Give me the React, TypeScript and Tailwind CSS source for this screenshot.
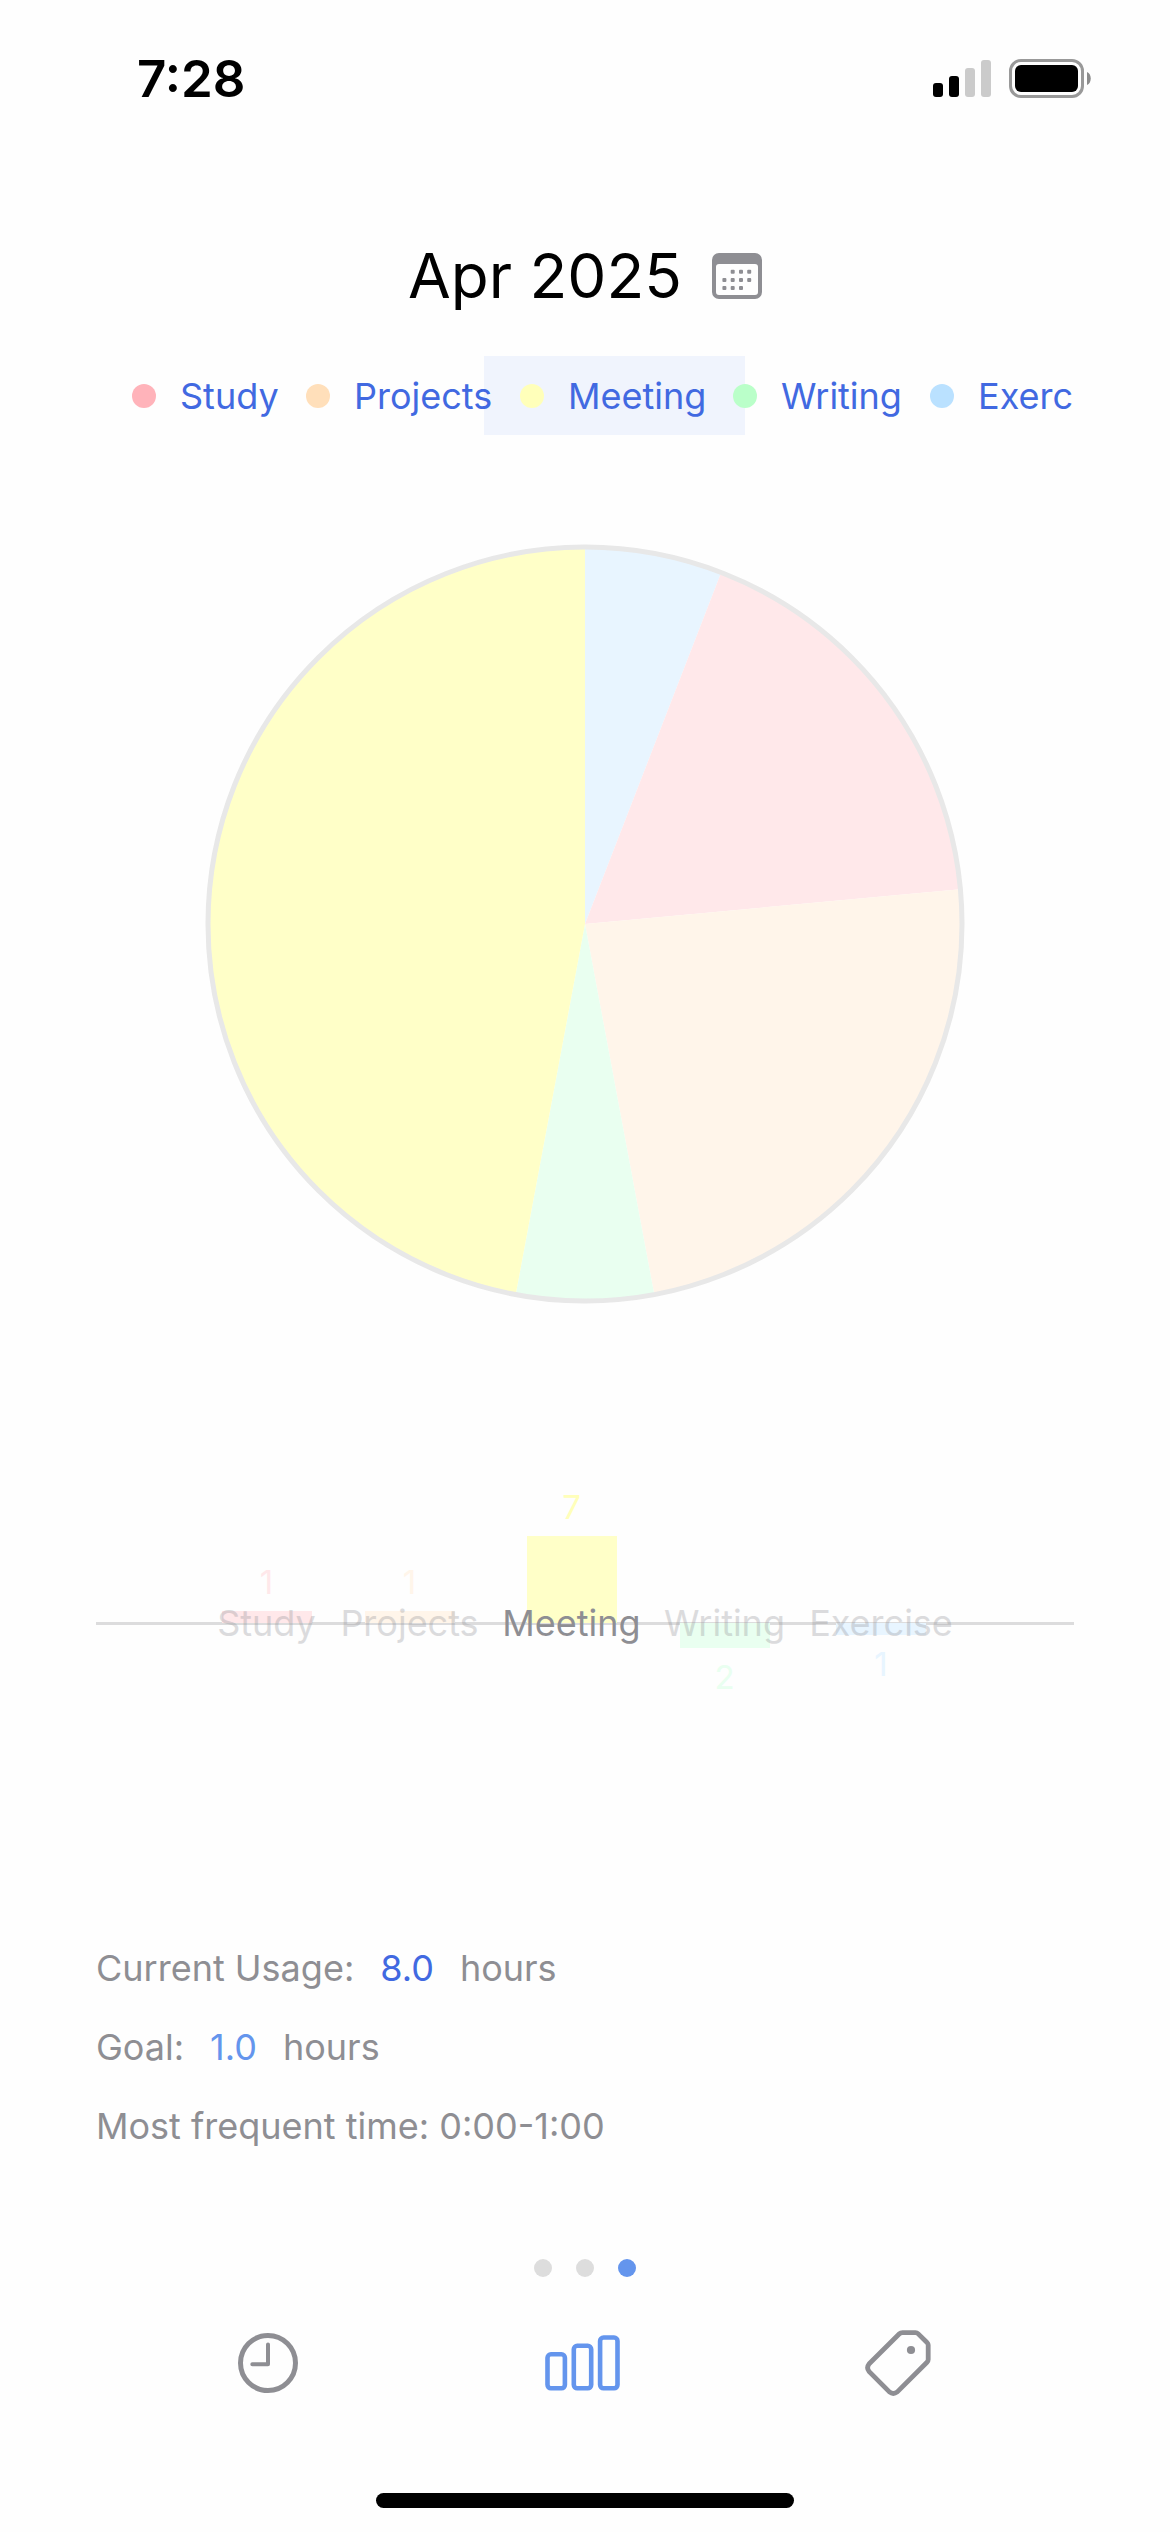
import React, { useState } from "react";

type Category = {
  name: string;
  delta: number;
  share: number;
  dot: string;
  bar: string;
  value: string;
  slice: string;
  legendWidth: string;
  labelWidth: string;
};

const categories: Category[] = [
  { name: "Study", delta: 1, share: 3, dot: "bg-[#ffb3ba]", bar: "bg-[#ffe8ea]", value: "text-[#ffe8ea]", slice: "fill-[#ffe8ea]", legendWidth: "w-[102px]", labelWidth: "w-[99px]" },
  { name: "Projects", delta: 1, share: 4, dot: "bg-[#ffdfba]", bar: "bg-[#fff5ea]", value: "text-[#fff5ea]", slice: "fill-[#fff5ea]", legendWidth: "w-[142px]", labelWidth: "w-[139px]" },
  { name: "Meeting", delta: 7, share: 8, dot: "bg-[#ffffba]", bar: "bg-[#ffffc8]", value: "text-[#ffffba]", slice: "fill-[#ffffc8]", legendWidth: "w-[141px]", labelWidth: "w-[137px]" },
  { name: "Writing", delta: -2, share: 1, dot: "bg-[#baffc9]", bar: "bg-[#e9fff0]", value: "text-[#e9fff0]", slice: "fill-[#e9fff0]", legendWidth: "w-[125px]", labelWidth: "w-[121px]" },
  { name: "Exercise", delta: -1, share: 1, dot: "bg-[#bae1ff]", bar: "bg-[#e8f5ff]", value: "text-[#e8f5ff]", slice: "fill-[#e8f5ff]", legendWidth: "w-[147px]", labelWidth: "w-[144px]" },
];

function StatusBar() {
  return (
    <header className="flex h-[156px] items-center justify-between pr-[79px] pl-[137px]">
      <time className="text-[51px] leading-none font-semibold">7:28</time>
      <div className="flex items-center gap-[18px]">
        <div className="flex h-[37px] items-end gap-[6px]" role="img" aria-label="Signal">
          <span className="h-[14px] w-[10px] rounded-[3px] bg-black" />
          <span className="h-[21px] w-[10px] rounded-[3px] bg-black" />
          <span className="h-[29px] w-[10px] rounded-[3px] bg-[#cbcbcb]" />
          <span className="h-[37px] w-[10px] rounded-[3px] bg-[#cbcbcb]" />
        </div>
        <svg className="h-[39px] w-[82px]" viewBox="0 0 82 39" role="img" aria-label="Battery">
          <rect x="1.5" y="1.5" width="72" height="36" rx="10.5" fill="none" stroke="#999" strokeWidth="3" />
          <rect x="6" y="6" width="63" height="27" rx="6" />
          <path d="M78 13c5 2 5 11 0 13z" fill="#8c8c8c" />
        </svg>
      </div>
    </header>
  );
}

function CalendarIcon() {
  return (
    <svg className="h-[46px] w-[50px]" viewBox="0 0 50 46" fill="#8e8e93" aria-hidden="true">
      <path fillRule="evenodd" d="M7 0H43a7 7 0 0 1 7 7V39a7 7 0 0 1-7 7H7a7 7 0 0 1-7-7V7a7 7 0 0 1 7-7zM7 11a3 3 0 0 0-3 3V39a3 3 0 0 0 3 3H43a3 3 0 0 0 3-3V14a3 3 0 0 0-3-3z" />
      {[[20.7, 18.7], [29, 18.7], [37.2, 18.7], [12.4, 27], [20.7, 27], [29, 27], [37.2, 27], [12.4, 35], [20.7, 35], [29, 35]].map(([x, y]) => (
        <rect key={`${x}-${y}`} x={x - 2} y={y - 2} width="4" height="4" rx="1" />
      ))}
    </svg>
  );
}

function PieChart() {
  const order = ["Exercise", "Study", "Projects", "Writing", "Meeting"];
  const slices = order.map((name) => categories.find((c) => c.name === name)!);
  const total = slices.reduce((sum, c) => sum + c.share, 0);
  const point = (turn: number) =>
    `${380 + 377 * Math.sin(turn * 2 * Math.PI)} ${380 - 377 * Math.cos(turn * 2 * Math.PI)}`;
  let start = 0;
  return (
    <svg className="mx-auto mt-[109px] block w-full max-w-[760px]" viewBox="0 0 760 760" role="img" aria-label="Time per category">
      {slices.map((c) => {
        const from = start;
        start += c.share / total;
        return <path key={c.name} className={c.slice} d={`M380 380L${point(from)}A377 377 0 0 1 ${point(start)}Z`} />;
      })}
      <circle cx="380" cy="380" r="377" fill="none" stroke="#e8e8e8" strokeWidth="5" />
    </svg>
  );
}

function BarColumn({ item, active }: { item: Category; active: boolean }) {
  const size = { height: Math.round(Math.abs(item.delta) * 12.4) };
  const up = item.delta > 0;
  const value = <span className={`text-[33px] leading-[58px] ${item.value}`}>{Math.abs(item.delta)}</span>;
  const bar = <span className={`w-[90px] ${item.bar}`} style={size} />;
  return (
    <div className={`relative flex flex-col items-center ${item.labelWidth}`}>
      <div className="flex h-[175px] flex-col items-center justify-end">
        {up && value}
        {up && bar}
      </div>
      <div className="flex h-[174px] flex-col items-center">
        {!up && bar}
        {!up && value}
      </div>
      <span className={`absolute inset-x-0 top-[151px] flex justify-center text-[36px] leading-[48px] whitespace-nowrap text-[#8e8e93] ${active ? "" : "opacity-30"}`}>
        {item.name}
      </span>
    </div>
  );
}

function ClockIcon() {
  return (
    <svg className="h-[60px] w-[60px]" viewBox="0 0 60 60" fill="none" stroke="#8e8e93" strokeLinecap="round" strokeLinejoin="round" aria-hidden="true">
      <circle cx="30" cy="30" r="27.5" strokeWidth="5" />
      <path d="M30 11.5V31.3H14.3" strokeWidth="4" />
    </svg>
  );
}

function BarsIcon() {
  return (
    <svg className="h-[56px] w-[76px]" viewBox="0 0 76 56" fill="none" stroke="#6495ed" strokeWidth="4.6" aria-hidden="true">
      <rect x="2.5" y="19.3" width="17.4" height="34" rx="3.5" />
      <rect x="28.8" y="10.8" width="17.4" height="42.5" rx="3.5" />
      <rect x="55.1" y="2.5" width="17.4" height="50.8" rx="3.5" />
    </svg>
  );
}

function TagIcon() {
  return (
    <svg className="h-[66px] w-[66px]" viewBox="0 0 66 66" aria-hidden="true">
      <path
        d="M37.5 2.6H50.5Q52 2.6 53 3.6L62 12.5Q63.2 13.6 63.2 15V29.5Q63.2 31 62 32.2L32.3 61.9Q28.2 65 24.4 61.9L4.2 41.6Q1 37.8 4.2 33.8L34.4 3.8Q35.6 2.6 37.5 2.6Z"
        fill="none"
        stroke="#8e8e93"
        strokeWidth="4.8"
        strokeLinejoin="round"
      />
      <circle cx="46" cy="20" r="4.1" fill="#8e8e93" />
    </svg>
  );
}

export default function App() {
  const [selected, setSelected] = useState("Meeting");
  return (
    <div className="flex min-h-screen flex-col bg-[#fefefe] font-['Inter',sans-serif] text-black">
      <StatusBar />
      <main className="flex flex-col px-24">
        <div className="mt-20 flex h-20 items-center justify-center gap-[30px]">
          <h1 className="text-[62px] leading-[80px] whitespace-nowrap">Apr 2025</h1>
          <button type="button" aria-label="Choose month">
            <CalendarIcon />
          </button>
        </div>

        <div className="isolate mt-10 flex overflow-hidden">
          {categories.map((c, i) => (
            <button
              key={c.name}
              type="button"
              aria-pressed={c.name === selected}
              onClick={() => setSelected(c.name)}
              className={`relative flex h-[79px] shrink-0 items-center gap-6 px-9 ${i > 0 ? "-ml-12" : ""}`}
            >
              {c.name === selected && <span className="absolute inset-0 -z-10 bg-[#f0f4fd]" />}
              <span className={`size-6 rounded-full ${c.dot}`} />
              <span className={`text-left text-[36px] leading-[48px] whitespace-nowrap text-[#4169e1] ${c.legendWidth}`}>{c.name}</span>
            </button>
          ))}
        </div>

        <PieChart />

        <section className="relative isolate mt-36 flex justify-center gap-6" aria-label="Change per category">
          <div className="absolute inset-x-0 top-[174px] -z-10 h-[3px] bg-[#dcdcdd]" />
          {categories.map((c) => (
            <BarColumn key={c.name} item={c} active={c.name === selected} />
          ))}
        </section>

        <section className="mt-[132px] text-[36px] leading-[79px] text-[#8e8e93]">
          <p className="flex gap-[26px]">
            Current Usage: <span className="text-[#4169e1]">8.0</span> <span>hours</span>
          </p>
          <p className="flex gap-[26px]">
            Goal: <span className="text-[#6495ed]">1.0</span> <span>hours</span>
          </p>
          <p>Most frequent time: 0:00-1:00</p>
        </section>
      </main>

      <div className="mt-[93px] flex justify-center gap-6">
        <button type="button" aria-label="Page 1" className="size-[18px] rounded-full bg-[#dddddd]" />
        <button type="button" aria-label="Page 2" className="size-[18px] rounded-full bg-[#dddddd]" />
        <button type="button" aria-label="Page 3" aria-current="true" className="size-[18px] rounded-full bg-[#6495ed]" />
      </div>

      <nav className="mt-10 grid h-[92px] grid-cols-3 pr-[114px] pl-[110px]">
        <button type="button" aria-label="Timer" className="flex items-center justify-center">
          <ClockIcon />
        </button>
        <button type="button" aria-label="Statistics" className="flex items-center justify-center">
          <BarsIcon />
        </button>
        <button type="button" aria-label="Tags" className="flex items-center justify-center">
          <TagIcon />
        </button>
      </nav>

      <div className="mx-auto mt-[84px] mb-6 h-[15px] w-[418px] rounded-full bg-black" />
    </div>
  );
}
